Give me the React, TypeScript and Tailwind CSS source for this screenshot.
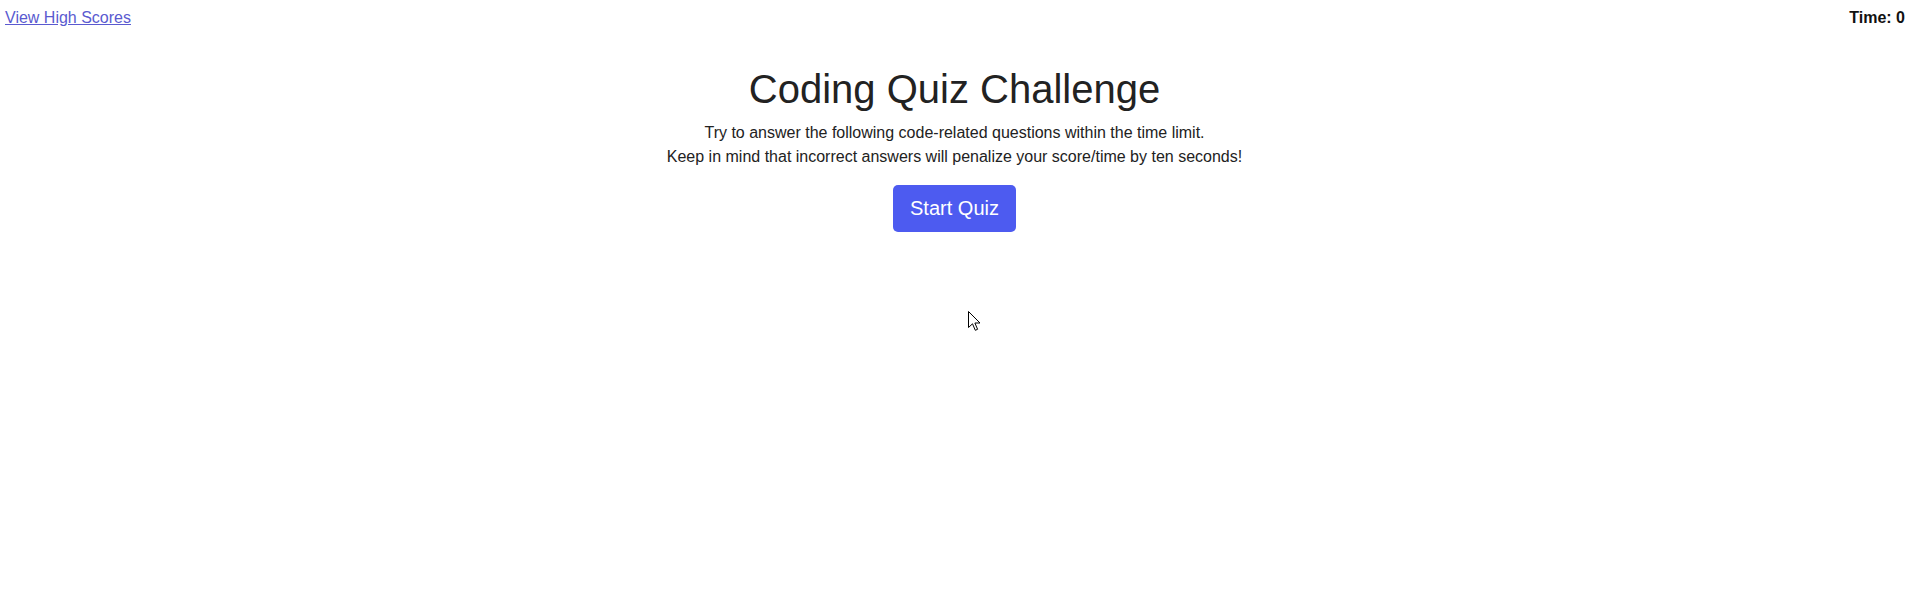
import React from "react";

export default function App() {
  return (
    <div className="relative min-h-[612px] w-full bg-white text-[#222] [font-family:'Liberation_Sans',Arial,sans-serif]">
      <header className="flex items-start justify-between pl-[5px] pr-[9px] pt-[6px] text-[16px] leading-[24px]">
        <a href="#" className="text-[#5a5ad0] underline">
          View High Scores
        </a>
        <div className="font-bold text-[#111]">Time: 0</div>
      </header>
      <main className="flex flex-col items-center pr-[5px] text-center">
        <h1 className="mt-[36px] text-[40px] font-normal leading-[46px] text-[#222]">
          Coding Quiz Challenge
        </h1>
        <p className="mt-[9px] text-[16px] leading-[24px]">
          Try to answer the following code-related questions within the time limit.
          <br />
          Keep in mind that incorrect answers will penalize your score/time by ten seconds!
        </p>
        <button className="mt-[16px] rounded-[5px] bg-[#4d5bf0] px-[17px] py-[8px] text-[20px] leading-[31px] text-white">
          Start Quiz
        </button>
      </main>
      <svg
        className="absolute left-[968px] top-[311px]"
        width="13"
        height="21"
        viewBox="0 0 13 21"
      >
        <path
          d="M0.5 0.5 L0.5 16.5 L4.5 12.8 L7.3 19.3 L9.6 18.3 L6.9 12 L12 12 Z"
          fill="white"
          stroke="black"
          strokeWidth="1"
          strokeLinejoin="miter"
        />
      </svg>
    </div>
  );
}
